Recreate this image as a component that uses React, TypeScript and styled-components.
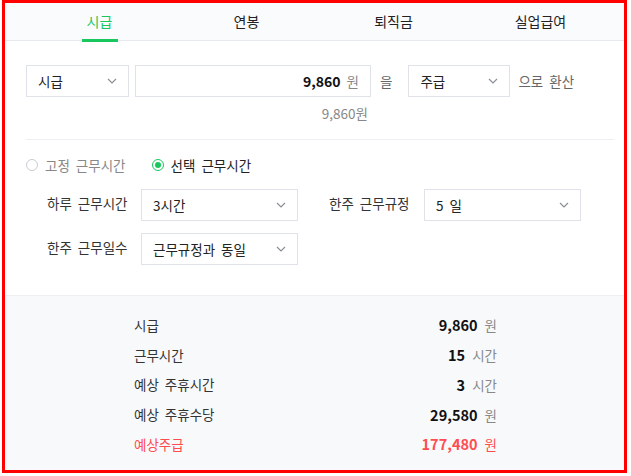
import React from "react";
import styled, { createGlobalStyle, css } from "styled-components";

const GlobalStyle = createGlobalStyle`
  html, body { margin: 0; padding: 0; background: #fff; }
  body {
    font-family: "Noto Sans CJK KR", "Noto Sans", sans-serif;
    color: #333;
    word-spacing: 3px;
    -webkit-font-smoothing: antialiased;
  }
`;

const GREEN = "#19c75f";
const RED = "#ff4d4f";

const Frame = styled.div`
  margin-left: 2px;
  width: 625px;
  height: 473px;
  box-sizing: border-box;
  border: 3px solid #ff0000;
  display: flex;
  flex-direction: column;
  background: #fff;
`;

const TabBar = styled.div`
  height: 37px;
  flex: none;
  display: grid;
  grid-template-columns: repeat(4, 1fr);
  padding: 0 10px 0 21px;
  background: #fafbfd;
  border-bottom: 1px solid #e6e9ee;
`;

const Tab = styled.div<{ $active?: boolean }>`
  position: relative;
  display: flex;
  align-items: center;
  justify-content: center;
  font-size: 14px;
  padding-bottom: 1px;
  color: ${(p) => (p.$active ? GREEN : "#222")};
  ${(p) =>
    p.$active &&
    css`
      &::after {
        content: "";
        position: absolute;
        bottom: -2px;
        left: 50%;
        width: 36px;
        height: 3px;
        margin-left: -18px;
        background: ${GREEN};
      }
    `}
`;

const Content = styled.div`
  padding: 24px 10px 0 21px;
`;

const ConvertRow = styled.div`
  display: flex;
  align-items: center;
`;

const SelectBox = styled.div<{ $width: number }>`
  width: ${(p) => p.$width}px;
  height: 32px;
  box-sizing: border-box;
  border: 1px solid #dfe3e9;
  background: #fff;
  display: flex;
  align-items: center;
  justify-content: space-between;
  padding: 0 11px 0 11px;
  font-size: 13.5px;
  color: #222;
  flex: none;
`;

const AmountInput = styled.div`
  width: 236px;
  height: 32px;
  box-sizing: border-box;
  border: 1px solid #dfe3e9;
  margin-left: 6px;
  display: flex;
  align-items: center;
  justify-content: flex-end;
  padding-right: 11px;
  gap: 6px;
`;

const AmountNumber = styled.span`
  font-size: 14px;
  font-weight: 700;
  color: #111;
`;

const Unit = styled.span<{ $red?: boolean }>`
  font-size: 13.5px;
  color: ${(p) => (p.$red ? RED : "#888")};
`;

const Word = styled.span<{ $left: number; $right: number }>`
  margin: 0 ${(p) => p.$right}px 0 ${(p) => p.$left}px;
  font-size: 13.5px;
  color: #666;
  white-space: nowrap;
`;

const Helper = styled.div`
  width: 342px;
  text-align: right;
  margin-top: 6px;
  font-size: 13.5px;
  line-height: 20px;
  color: #888;
`;

const Divider = styled.div`
  height: 1px;
  background: #eceef1;
  margin-top: 16px;
`;

const RadioRow = styled.div`
  display: flex;
  align-items: center;
  margin-top: 16px;
  height: 18px;
`;

const RadioItem = styled.label<{ $checked?: boolean }>`
  display: flex;
  align-items: center;
  gap: 7px;
  margin-right: 26px;
  font-size: 13.5px;
  color: ${(p) => (p.$checked ? "#222" : "#888")};
`;

const RadioCircle = styled.span<{ $checked?: boolean }>`
  width: 12px;
  height: 12px;
  box-sizing: border-box;
  border-radius: 50%;
  border: ${(p) => (p.$checked ? `1.5px solid ${GREEN}` : "1px solid #c9cdd2")};
  display: flex;
  align-items: center;
  justify-content: center;
  background: #fff;
  &::after {
    content: "";
    display: ${(p) => (p.$checked ? "block" : "none")};
    width: 6px;
    height: 6px;
    border-radius: 50%;
    background: ${GREEN};
  }
`;

const FieldGrid = styled.div`
  display: grid;
  grid-template-columns: 251px 252px;
  column-gap: 31px;
  row-gap: 12px;
  margin-top: 15px;
  padding-left: 21px;
`;

const Field = styled.div<{ $labelWidth: number }>`
  display: grid;
  grid-template-columns: ${(p) => p.$labelWidth}px 1fr;
  align-items: center;
`;

const FieldLabel = styled.span`
  font-size: 13.5px;
  color: #333;
  white-space: nowrap;
  padding-bottom: 4px;
`;

const ResultSection = styled.div`
  flex: 1;
  margin-top: 30px;
  background: #f8f9fb;
  border-top: 1px solid #eef0f3;
  padding-top: 14px;
`;

const ResultList = styled.div`
  width: 363px;
  margin-left: 129px;
  display: flex;
  flex-direction: column;
`;

const ResultRow = styled.div<{ $red?: boolean }>`
  height: 29.75px;
  display: flex;
  align-items: center;
  justify-content: space-between;
  color: ${(p) => (p.$red ? RED : "#333")};
`;

const ResultLabel = styled.span`
  font-size: 13.5px;
`;

const ResultValue = styled.span`
  display: flex;
  align-items: baseline;
  gap: 7px;
`;

const ResultNumber = styled.span<{ $red?: boolean }>`
  font-size: 14.5px;
  font-weight: 700;
  color: ${(p) => (p.$red ? RED : "#111")};
`;

const Chevron = () => (
  <svg width="10" height="6" viewBox="0 0 10 6" fill="none">
    <polyline points="1,1 5,5 9,1" stroke="#8a8f96" strokeWidth="1.2" />
  </svg>
);

const Select = ({ value, width }: { value: string; width: number }) => (
  <SelectBox $width={width}>
    <span>{value}</span>
    <Chevron />
  </SelectBox>
);

const results = [
  { label: "시급", num: "9,860", unit: "원" },
  { label: "근무시간", num: "15", unit: "시간" },
  { label: "예상 주휴시간", num: "3", unit: "시간" },
  { label: "예상 주휴수당", num: "29,580", unit: "원" },
  { label: "예상주급", num: "177,480", unit: "원", red: true },
];

export default function App() {
  return (
    <>
      <GlobalStyle />
      <Frame>
        <TabBar>
          <Tab $active>시급</Tab>
          <Tab>연봉</Tab>
          <Tab>퇴직금</Tab>
          <Tab>실업급여</Tab>
        </TabBar>
        <Content>
          <ConvertRow>
            <Select value="시급" width={103} />
            <AmountInput>
              <AmountNumber>9,860</AmountNumber>
              <Unit>원</Unit>
            </AmountInput>
            <Word $left={9} $right={16}>을</Word>
            <Select value="주급" width={102} />
            <Word $left={8} $right={0}>으로 환산</Word>
          </ConvertRow>
          <Helper>9,860원</Helper>
          <Divider />
          <RadioRow>
            <RadioItem>
              <RadioCircle />
              고정 근무시간
            </RadioItem>
            <RadioItem $checked>
              <RadioCircle $checked />
              선택 근무시간
            </RadioItem>
          </RadioRow>
          <FieldGrid>
            <Field $labelWidth={94}>
              <FieldLabel>하루 근무시간</FieldLabel>
              <Select value="3시간" width={157} />
            </Field>
            <Field $labelWidth={95}>
              <FieldLabel>한주 근무규정</FieldLabel>
              <Select value="5 일" width={157} />
            </Field>
            <Field $labelWidth={94}>
              <FieldLabel>한주 근무일수</FieldLabel>
              <Select value="근무규정과 동일" width={157} />
            </Field>
          </FieldGrid>
        </Content>
        <ResultSection>
          <ResultList>
            {results.map((r) => (
              <ResultRow key={r.label} $red={r.red}>
                <ResultLabel>{r.label}</ResultLabel>
                <ResultValue>
                  <ResultNumber $red={r.red}>{r.num}</ResultNumber>
                  <Unit $red={r.red}>{r.unit}</Unit>
                </ResultValue>
              </ResultRow>
            ))}
          </ResultList>
        </ResultSection>
      </Frame>
    </>
  );
}
